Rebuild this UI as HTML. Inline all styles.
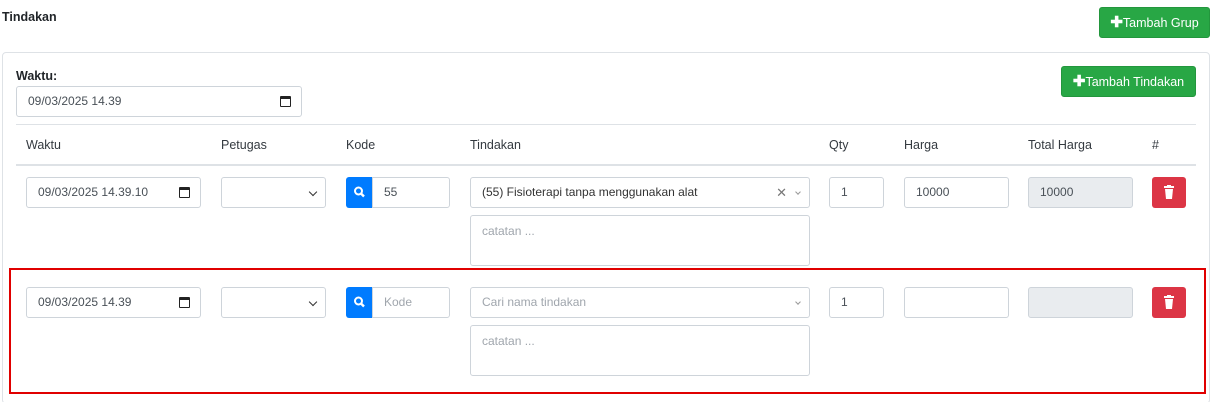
<!DOCTYPE html>
<html style="height:402px;overflow:hidden"><head><style>
*{box-sizing:border-box}
body{margin:0;width:1216px;height:402px;background:#fff;font-family:"Liberation Sans",sans-serif;font-size:13px;color:#212529;position:relative;overflow:hidden}
.a{position:absolute}
.in{position:absolute;border:1px solid #ced4da;border-radius:3px;background:#fff;height:31px;padding:0 11px;line-height:29px;font-size:12px;color:#495057;white-space:nowrap}
.ph{color:#a0a6ad}
.btn{position:absolute;background:#28a745;border:1px solid #23963d;border-radius:3px;color:#fff;font-size:12.5px;line-height:29px;height:31px;text-align:center}
.th{position:absolute;top:138px;font-size:12.5px;color:#343a40}
.cal{position:absolute;right:10px;top:9px;width:11px;height:11px;border:1.5px solid #222;border-top-width:3px;border-radius:1px}
.chev{position:absolute;right:9px;top:11px;width:6px;height:6px;border-right:1.5px solid #333;border-bottom:1.5px solid #333;transform:rotate(45deg)}
.chev2{position:absolute;right:9px;top:12px;width:4px;height:4px;border-right:1px solid #999;border-bottom:1px solid #999;transform:rotate(45deg)}
.srch{position:absolute;background:#007bff;border-radius:3px 0 0 3px;width:27px;height:31px}
.del{position:absolute;background:#dc3545;border-radius:3px;width:34px;height:31px}
.ta{position:absolute;border:1px solid #ced4da;border-radius:3px;padding:8px 11px;font-size:12px;color:#a0a6ad}
b.p{font-size:15px}
</style></head><body>
<div class="a" style="left:2px;top:10px;font-weight:bold;font-size:12.5px">Tindakan</div>
<div class="btn" style="left:1099px;top:7px;width:111px"><b class="p">✚</b>Tambah Grup</div>
<div class="a" style="left:2px;top:52px;width:1208px;height:352px;border:1px solid #dee2e6;border-radius:4px"></div>
<div class="a" style="left:16px;top:69px;font-weight:bold;font-size:12.5px">Waktu:</div>
<div class="in" style="left:16px;top:86px;width:286px">09/03/2025 14.39<span class="cal"></span></div>
<div class="btn" style="left:1061px;top:66px;width:135px"><b class="p">✚</b>Tambah Tindakan</div>
<div class="a" style="left:16px;top:124px;width:1180px;border-top:1px solid #dee2e6"></div>
<div class="a" style="left:16px;top:164px;width:1180px;border-top:2px solid #dee2e6"></div>
<div class="th" style="left:26px">Waktu</div><div class="th" style="left:221px">Petugas</div><div class="th" style="left:346px">Kode</div><div class="th" style="left:470px">Tindakan</div><div class="th" style="left:829px">Qty</div><div class="th" style="left:904px">Harga</div><div class="th" style="left:1028px">Total Harga</div><div class="th" style="left:1152px">#</div>

<div class="in" style="left:26px;top:177px;width:175px">09/03/2025 14.39.10<span class="cal"></span></div>
<div class="in" style="left:221px;top:177px;width:105px"><span class="chev"></span></div>
<div class="srch" style="left:346px;top:177px"><svg width="27" height="31"><circle cx="12.5" cy="14" r="3.5" fill="none" stroke="#fff" stroke-width="2"/><line x1="15" y1="16.5" x2="18" y2="19.5" stroke="#fff" stroke-width="2.4"/></svg></div>
<div class="in" style="left:372px;top:177px;width:78px;border-radius:0 3px 3px 0">55</div>
<div class="in" style="left:470px;top:177px;width:340px;color:#333">(55) Fisioterapi tanpa menggunakan alat<span class="a" style="right:22px;top:0;color:#777;font-size:13px">✕</span><span class="chev2"></span></div>
<div class="ta" style="left:470px;top:215px;width:340px;height:51px">catatan ...</div>
<div class="in" style="left:829px;top:177px;width:55px">1</div>
<div class="in" style="left:904px;top:177px;width:105px">10000</div>
<div class="in" style="left:1028px;top:177px;width:105px;background:#e9ecef">10000</div>
<div class="del" style="left:1152px;top:177px"><svg width="34" height="31"><rect x="12" y="9" width="10" height="2" fill="#fff"/><rect x="15" y="8" width="4" height="2" fill="#fff"/><path d="M13 12h8l-1 10h-6z" fill="#fff"/></svg></div>

<div class="a" style="left:9px;top:268px;width:1197px;height:126px;border:2px solid #e00000"></div>
<div class="in" style="left:26px;top:287px;width:175px">09/03/2025 14.39<span class="cal"></span></div>
<div class="in" style="left:221px;top:287px;width:105px"><span class="chev"></span></div>
<div class="srch" style="left:346px;top:287px"><svg width="27" height="31"><circle cx="12.5" cy="14" r="3.5" fill="none" stroke="#fff" stroke-width="2"/><line x1="15" y1="16.5" x2="18" y2="19.5" stroke="#fff" stroke-width="2.4"/></svg></div>
<div class="in ph" style="left:372px;top:287px;width:78px;border-radius:0 3px 3px 0">Kode</div>
<div class="in ph" style="left:470px;top:287px;width:340px">Cari nama tindakan<span class="chev2"></span></div>
<div class="ta" style="left:470px;top:325px;width:340px;height:51px">catatan ...</div>
<div class="in" style="left:829px;top:287px;width:55px">1</div>
<div class="in" style="left:904px;top:287px;width:105px"></div>
<div class="in" style="left:1028px;top:287px;width:105px;background:#e9ecef"></div>
<div class="del" style="left:1152px;top:287px"><svg width="34" height="31"><rect x="12" y="9" width="10" height="2" fill="#fff"/><rect x="15" y="8" width="4" height="2" fill="#fff"/><path d="M13 12h8l-1 10h-6z" fill="#fff"/></svg></div>
</body></html>
